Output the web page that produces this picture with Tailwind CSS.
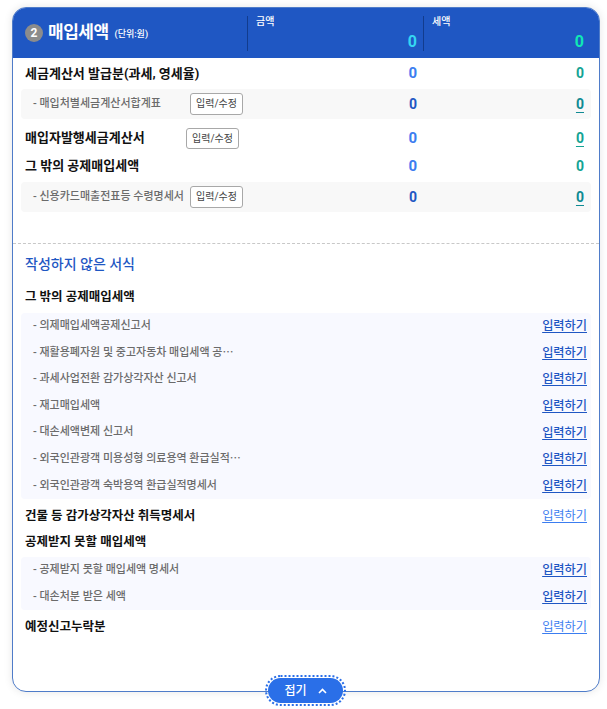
<!DOCTYPE html>
<html lang="ko">

<head>
    <meta charset="UTF-8">
    <meta name="viewport" content="width=device-width, initial-scale=1.0">
    <title>매입세액</title>
    <script src="https://cdn.jsdelivr.net/npm/@tailwindcss/browser@4"></script>
</head>

<body class="bg-white font-['Roboto','Noto_Sans_CJK_KR',sans-serif]">
    <div class="relative w-[607px] h-[709px] pt-[7px] pl-[12px] overflow-hidden">
        <div class="w-[588px] h-[685px] rounded-[14px] border border-[#4f7cc9] bg-white shadow-[0_0_8px_rgba(0,0,0,0.1)]">
            <!-- header -->
            <div class="flex h-[50px] rounded-t-[13px] bg-[#1f57c3] text-white">
                <div class="flex items-center w-[234px] pl-[12px]">
                    <span class="flex items-center justify-center w-[18px] h-[18px] rounded-full bg-[#8c8c8c] text-[12px] font-bold">2</span>
                    <span class="ml-[5px] text-[17px] font-bold tracking-[-0.5px]">매입세액</span>
                    <span class="ml-[6px] mt-[3px] text-[9px] font-medium">(단위:원)</span>
                </div>
                <div class="flex items-center"><div class="w-px h-[35px] bg-[#123c8e]"></div></div>
                <div class="relative w-[175px] pl-[8px]">
                    <div class="pt-[7px] text-[10px] font-medium leading-[14px]">금액</div>
                    <div class="absolute right-[6px] top-[24px] text-[16px] font-bold leading-[20px] text-[#35d6f2]">0</div>
                </div>
                <div class="flex items-center"><div class="w-px h-[35px] bg-[#123c8e]"></div></div>
                <div class="relative flex-1 pl-[8px]">
                    <div class="pt-[7px] text-[10px] font-medium leading-[14px]">세액</div>
                    <div class="absolute right-[15px] top-[24px] text-[16px] font-bold leading-[20px] text-[#10e8b4]">0</div>
                </div>
            </div>

            <!-- written forms -->
            <div class="px-[8px]">
                <div class="flex items-center h-[31px] pl-[4px]">
                    <div class="w-[342px] text-[13px] font-bold text-[#111]">세금계산서 발급분(과세, 영세율)</div>
                    <div class="w-[50px] text-right text-[15px] font-bold text-[#3b7df0]">0</div>
                    <div class="w-[167px] text-right text-[14px] font-bold text-[#14a394]">0</div>
                </div>
                <div class="flex items-center h-[30px] pl-[12px] rounded-[4px] bg-[#f8f8f8]">
                    <div class="flex items-center w-[334px]">
                        <div class="w-[157px] text-[11px] font-medium text-[#6b6b6b]">- 매입처별세금계산서합계표</div>
                        <span class="px-[5px] h-[22px] leading-[20px] rounded-[3px] border border-[#a8a8a8] bg-white text-[10px] text-[#444]">입력/수정</span>
                    </div>
                    <div class="w-[50px] text-right text-[14px] font-bold text-[#1f57c3]">0</div>
                    <div class="w-[167px] text-right text-[14px] font-bold text-[#0f8a93] underline underline-offset-[3px]">0</div>
                </div>
                <div class="flex items-center h-[38px] pl-[4px]">
                    <div class="flex items-center w-[342px]">
                        <div class="w-[161px] text-[13px] font-bold text-[#111]">매입자발행세금계산서</div>
                        <span class="px-[5px] h-[21px] leading-[19px] rounded-[3px] border border-[#a8a8a8] bg-white text-[10px] text-[#444]">입력/수정</span>
                    </div>
                    <div class="w-[50px] text-right text-[15px] font-bold text-[#3b7df0]">0</div>
                    <div class="w-[167px] text-right text-[14px] font-bold text-[#14a394] underline underline-offset-[3px]">0</div>
                </div>
                <div class="flex items-center h-[18px] pl-[4px] mb-[7px]">
                    <div class="w-[342px] text-[13px] font-bold text-[#111]">그 밖의 공제매입세액</div>
                    <div class="w-[50px] text-right text-[15px] font-bold text-[#3b7df0]">0</div>
                    <div class="w-[167px] text-right text-[14px] font-bold text-[#14a394]">0</div>
                </div>
                <div class="flex items-center h-[30px] pl-[12px] rounded-[4px] bg-[#f8f8f8]">
                    <div class="flex items-center w-[334px]">
                        <div class="w-[157px] text-[11px] font-medium text-[#6b6b6b] whitespace-nowrap">- 신용카드매출전표등 수령명세서</div>
                        <span class="px-[5px] h-[22px] leading-[20px] rounded-[3px] border border-[#a8a8a8] bg-white text-[10px] text-[#444]">입력/수정</span>
                    </div>
                    <div class="w-[50px] text-right text-[14px] font-bold text-[#1f57c3]">0</div>
                    <div class="w-[167px] text-right text-[14px] font-bold text-[#0f8a93] underline underline-offset-[3px]">0</div>
                </div>
            </div>

            <div class="mt-[31px] border-t border-dashed border-[#c8c8c8]"></div>

            <!-- unwritten forms -->
            <div class="px-[8px]">
                <div class="pl-[4px] pt-[10px] h-[36px] text-[14px] font-medium leading-[20px] text-[#1f57c3]">작성하지 않은 서식</div>
                <div class="flex items-center h-[33px] pl-[4px] pt-[2px] text-[12.5px] font-bold text-[#111]">그 밖의 공제매입세액</div>
                <div class="rounded-[4px] bg-[#f8f9ff] pl-[12px] pr-[4px]">
                    <div class="flex justify-between items-center h-[26.6px]"><span class="text-[11px] font-medium text-[#6b6b6b]">- 의제매입세액공제신고서</span><a class="text-[12.2px] font-medium text-[#1f57c3] underline underline-offset-[2px]">입력하기</a></div>
                    <div class="flex justify-between items-center h-[26.6px]"><span class="text-[11px] font-medium text-[#6b6b6b]">- 재활용폐자원 및 중고자동차 매입세액 공⋯</span><a class="text-[12.2px] font-medium text-[#1f57c3] underline underline-offset-[2px]">입력하기</a></div>
                    <div class="flex justify-between items-center h-[26.6px]"><span class="text-[11px] font-medium text-[#6b6b6b]">- 과세사업전환 감가상각자산 신고서</span><a class="text-[12.2px] font-medium text-[#1f57c3] underline underline-offset-[2px]">입력하기</a></div>
                    <div class="flex justify-between items-center h-[26.6px]"><span class="text-[11px] font-medium text-[#6b6b6b]">- 재고매입세액</span><a class="text-[12.2px] font-medium text-[#1f57c3] underline underline-offset-[2px]">입력하기</a></div>
                    <div class="flex justify-between items-center h-[26.6px]"><span class="text-[11px] font-medium text-[#6b6b6b]">- 대손세액변제 신고서</span><a class="text-[12.2px] font-medium text-[#1f57c3] underline underline-offset-[2px]">입력하기</a></div>
                    <div class="flex justify-between items-center h-[26.6px]"><span class="text-[11px] font-medium text-[#6b6b6b]">- 외국인관광객 미용성형 의료용역 환급실적⋯</span><a class="text-[12.2px] font-medium text-[#1f57c3] underline underline-offset-[2px]">입력하기</a></div>
                    <div class="flex justify-between items-center h-[26.6px]"><span class="text-[11px] font-medium text-[#6b6b6b]">- 외국인관광객 숙박용역 환급실적명세서</span><a class="text-[12.2px] font-medium text-[#1f57c3] underline underline-offset-[2px]">입력하기</a></div>
                </div>
                <div class="flex justify-between items-center h-[34px] px-[4px]">
                    <span class="text-[12.5px] font-bold text-[#111]">건물 등 감가상각자산 취득명세서</span>
                    <a class="text-[12.2px] text-[#3b7df0] underline underline-offset-[2px]">입력하기</a>
                </div>
                <div class="flex items-center h-[18px] mb-[6px] pl-[4px] text-[12.5px] font-bold text-[#111]">공제받지 못할 매입세액</div>
                <div class="rounded-[4px] bg-[#f8f9ff] pl-[12px] pr-[4px]">
                    <div class="flex justify-between items-center h-[26.5px]"><span class="text-[11px] font-medium text-[#6b6b6b]">- 공제받지 못할 매입세액 명세서</span><a class="text-[12.2px] font-medium text-[#1f57c3] underline underline-offset-[2px]">입력하기</a></div>
                    <div class="flex justify-between items-center h-[26.5px]"><span class="text-[11px] font-medium text-[#6b6b6b]">- 대손처분 받은 세액</span><a class="text-[12.2px] font-medium text-[#1f57c3] underline underline-offset-[2px]">입력하기</a></div>
                </div>
                <div class="flex justify-between items-center h-[34px] px-[4px]">
                    <span class="text-[12.5px] font-bold text-[#111]">예정신고누락분</span>
                    <a class="text-[12.2px] text-[#3b7df0] underline underline-offset-[2px]">입력하기</a>
                </div>
            </div>
        </div>

        <!-- collapse button -->
        <button class="absolute left-[268px] top-[678px] flex items-center justify-center w-[75px] h-[25px] rounded-full bg-[#2a6fe8] text-white text-[12px] font-medium outline-2 outline-dotted outline-[#2a6fe8] outline-offset-[1px]">
            <span>접기</span>
            <svg class="ml-[11px]" width="9" height="6" viewBox="0 0 9 6" fill="none" stroke="white" stroke-width="1.6"><path d="M1 5 L4.5 1.5 L8 5"/></svg>
        </button>
    </div>
</body>

</html>
